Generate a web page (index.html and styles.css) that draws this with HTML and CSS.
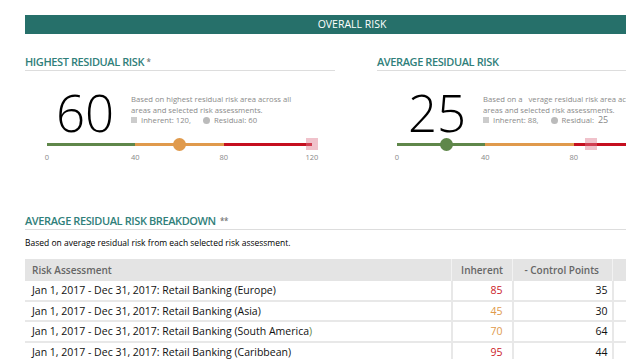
FILE: index.html
```html
<!DOCTYPE html>
<html lang="en">
<head>
    <meta charset="UTF-8">
    <title>Overall Risk</title>
    <link rel="stylesheet" href="styles.css">
</head>
<body>
    <div class="page">
        <div class="banner">OVERALL RISK</div>

        <div class="panels">
            <section class="panel">
                <h2 class="section-title">Highest Residual Risk <span class="note">*</span></h2>
                <div class="score-row">
                    <div class="score">60</div>
                    <div class="score-desc">
                        <p>Based on highest residual risk area across all<br>areas and selected risk assessments.</p>
                        <p class="legend"><span class="key-sq"></span>Inherent: 120, <span class="key-dot"></span>Residual: 60</p>
                    </div>
                </div>
                <div class="gauge">
                    <div class="track">
                        <span class="seg green"></span><span class="seg orange"></span><span class="seg red"></span>
                        <span class="mark-inherent" style="left: 100%"></span>
                        <span class="mark-residual orange" style="left: 50%"></span>
                    </div>
                    <div class="ticks"><span>0</span><span>40</span><span>80</span><span>120</span></div>
                </div>
            </section>

            <section class="panel">
                <h2 class="section-title">Average Residual Risk</h2>
                <div class="score-row">
                    <div class="score">25</div>
                    <div class="score-desc">
                        <p>Based on a&nbsp;&nbsp;&nbsp;verage residual risk area across all<br>areas and selected risk assessments.</p>
                        <p class="legend"><span class="key-sq"></span>Inherent: 88, <span class="key-dot"></span>Residual: &nbsp;<span class="big">25</span></p>
                    </div>
                </div>
                <div class="gauge">
                    <div class="track">
                        <span class="seg green"></span><span class="seg orange"></span><span class="seg red"></span>
                        <span class="mark-inherent" style="left: 73.3%"></span>
                        <span class="mark-residual green" style="left: 18.5%"></span>
                    </div>
                    <div class="ticks"><span>0</span><span>40</span><span>80</span><span>120</span></div>
                </div>
            </section>
        </div>

        <section class="breakdown">
            <h2 class="section-title">Average Residual Risk Breakdown <span class="note">&nbsp;**</span></h2>
            <p class="subtitle">Based on average residual risk from each selected risk assessment.</p>
            <table class="risk-table">
                <thead>
                    <tr>
                        <th class="col-name">Risk Assessment</th>
                        <th class="col-num">Inherent</th>
                        <th class="col-ctrl">- Control Points</th>
                        <th class="col-res">= Residual</th>
                    </tr>
                </thead>
                <tbody>
                    <tr>
                        <td>Jan 1, 2017 - Dec 31, 2017: Retail Banking (Europe)</td>
                        <td class="num high">85</td>
                        <td class="num">35</td>
                        <td class="num"></td>
                    </tr>
                    <tr>
                        <td>Jan 1, 2017 - Dec 31, 2017: Retail Banking (Asia)</td>
                        <td class="num mid">45</td>
                        <td class="num">30</td>
                        <td class="num"></td>
                    </tr>
                    <tr>
                        <td>Jan 1, 2017 - Dec 31, 2017: Retail Banking (South America<span class="low">)</span></td>
                        <td class="num mid">70</td>
                        <td class="num">64</td>
                        <td class="num"></td>
                    </tr>
                    <tr>
                        <td>Jan 1, 2017 - Dec 31, 2017: Retail Banking (Caribbean)</td>
                        <td class="num high">95</td>
                        <td class="num">44</td>
                        <td class="num"></td>
                    </tr>
                </tbody>
            </table>
        </section>
    </div>
</body>
</html>
```

FILE: styles.css
```css
body {
    margin: 0;
    font-family: "Open Sans", sans-serif;
    background: #fff;
    color: #111;
    overflow: hidden;
}
.page {
    width: 662px;
    padding: 15px 0 0 25px;
}
.banner {
    background-color: #26706a;
    color: #fff;
    text-align: center;
    font-size: 10.5px;
    height: 19px;
    line-height: 19px;
    padding-right: 8px;
}
.panels {
    display: grid;
    grid-template-columns: 310px 310px;
    column-gap: 42px;
    margin-top: 21px;
}
.section-title {
    margin: 0;
    font-size: 11px;
    font-weight: 600;
    letter-spacing: -0.4px;
    line-height: 14px;
    color: #30807a;
    text-transform: uppercase;
    padding-bottom: 1px;
    border-bottom: 1px solid #ddd;
}
.section-title .note {
    color: #777;
    font-size: 8px;
    vertical-align: top;
}
.score-row {
    display: flex;
    margin-top: 16px;
    padding-left: 31px;
}
.score {
    width: 75px;
    flex: none;
    font-size: 51px;
    font-weight: 300;
    line-height: 50px;
    color: #000;
}
.score-desc {
    font-size: 7.7px;
    line-height: 10.5px;
    color: #8a8a8a;
    padding-top: 7px;
    white-space: nowrap;
}
.score-desc p {
    margin: 0;
}
.legend {
    display: flex;
    align-items: center;
}
.legend .big {
    font-size: 9px;
    color: #888;
}
.key-sq {
    width: 6px;
    height: 6px;
    background: #ccc;
    margin-right: 4px;
}
.key-dot {
    width: 7px;
    height: 7px;
    border-radius: 50%;
    background: #bbb;
    margin: 0 4px 0 12px;
}
.gauge {
    width: 265px;
    margin: 6px 0 0 22px;
}
.panel + .panel .gauge {
    margin-left: 20px;
}
.track {
    position: relative;
    display: flex;
    height: 3px;
    margin-top: 2px;
}
.seg {
    flex: 1;
}
.seg.green {
    background: #5f874a;
}
.seg.orange {
    background: #e09a4c;
}
.seg.red {
    background: #c50f1f;
}
.mark-inherent {
    position: absolute;
    top: -5px;
    width: 12px;
    height: 12px;
    margin-left: -6px;
    background: rgba(222, 120, 140, 0.45);
}
.mark-residual {
    position: absolute;
    top: -5px;
    width: 13px;
    height: 13px;
    margin-left: -6.5px;
    border-radius: 50%;
}
.mark-residual.orange {
    background: #e09a4c;
}
.mark-residual.green {
    background: #5f874a;
}
.ticks {
    display: flex;
    justify-content: space-between;
    margin-top: 6px;
    font-size: 7.5px;
    line-height: 10px;
    color: #888;
}
.ticks span {
    width: 0;
    display: flex;
    justify-content: center;
}
.breakdown {
    margin-top: 52px;
}
.subtitle {
    margin: 7px 0 10px;
    font-size: 8.5px;
    line-height: 12px;
    color: #000;
}
.risk-table {
    width: 662px;
    border-collapse: collapse;
    table-layout: fixed;
    font-size: 10.5px;
}
.risk-table th {
    background: #e4e4e4;
    color: #666;
    font-weight: 600;
    font-size: 10px;
    height: 22px;
    padding: 0 7px;
    text-align: right;
    border-left: 1px solid #f2f2f2;
}
.risk-table th.col-name {
    text-align: left;
    width: 412px;
    border-left: none;
}
.risk-table th.col-num {
    width: 47px;
    padding-right: 9px;
    padding-left: 4px;
}
.risk-table th.col-ctrl {
    width: 86px;
    padding-right: 13px;
    padding-left: 0;
}
.risk-table td {
    height: 18.5px;
    padding: 0 7px;
    border-bottom: 2px solid #e8e8e8;
    border-left: 2px solid #e8e8e8;
    white-space: nowrap;
}
.risk-table td:first-child {
    border-left: none;
}
.risk-table td.num {
    text-align: right;
    padding-right: 9px;
}
.risk-table td:nth-child(3) {
    padding-right: 4px;
}
.high {
    color: #cc1a27;
}
.mid {
    color: #e09a4c;
}
.low {
    color: #5f874a;
}
```
